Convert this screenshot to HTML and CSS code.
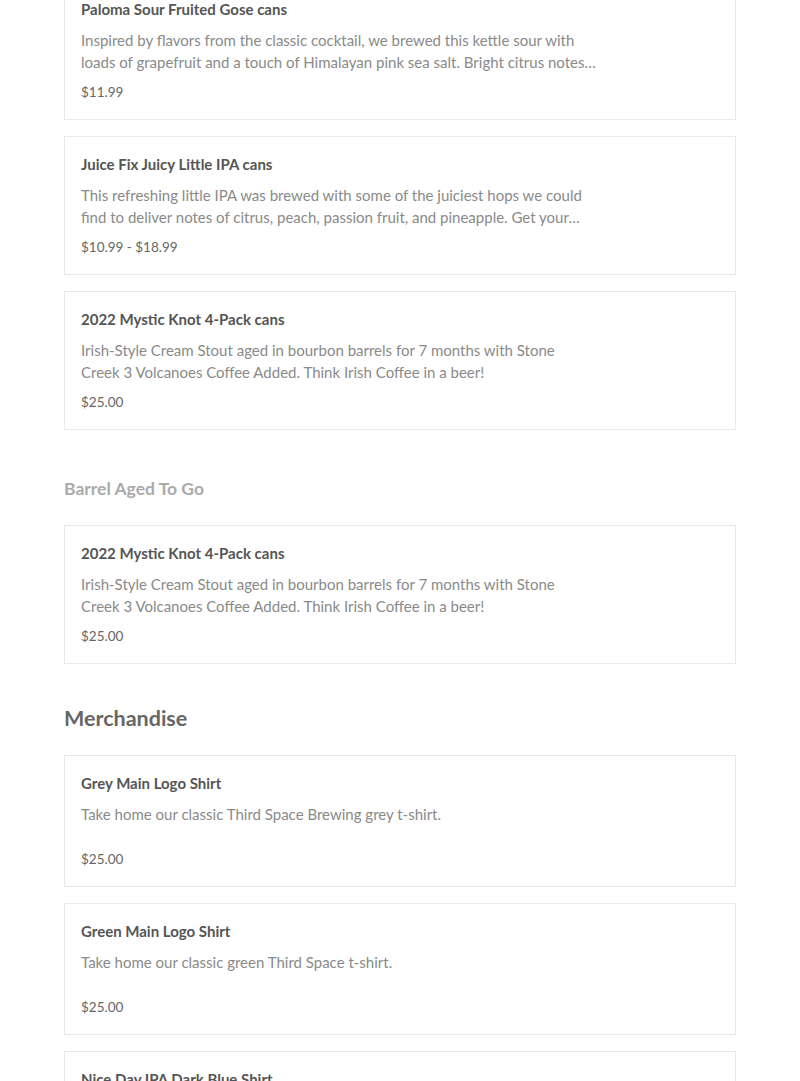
FILE: index.html
```
<!DOCTYPE html>
<html>
<head>
<meta charset="utf-8">
<link rel="stylesheet" href="styles.css">
</head>
<body>
<main class="menu">
  <section class="group">
    <div class="card">
      <h3 class="item-title">Paloma Sour Fruited Gose cans</h3>
      <p class="item-desc">Inspired by flavors from the classic cocktail, we brewed this kettle sour with loads of grapefruit and a touch of Himalayan pink sea salt. Bright citrus notes and a refreshing finish.</p>
      <div class="item-price">$11.99</div>
    </div>
    <div class="card">
      <h3 class="item-title">Juice Fix Juicy Little IPA cans</h3>
      <p class="item-desc">This refreshing little IPA was brewed with some of the juiciest hops we could find to deliver notes of citrus, peach, passion fruit, and pineapple. Get your juice fix today with this crushable little IPA.</p>
      <div class="item-price">$10.99 - $18.99</div>
    </div>
    <div class="card">
      <h3 class="item-title">2022 Mystic Knot 4-Pack cans</h3>
      <p class="item-desc">Irish-Style Cream Stout aged in bourbon barrels for 7 months with Stone Creek 3 Volcanoes Coffee Added. Think Irish Coffee in a beer!</p>
      <div class="item-price">$25.00</div>
    </div>
  </section>

  <h4 class="sub-heading">Barrel Aged To Go</h4>
  <section class="group">
    <div class="card">
      <h3 class="item-title">2022 Mystic Knot 4-Pack cans</h3>
      <p class="item-desc">Irish-Style Cream Stout aged in bourbon barrels for 7 months with Stone Creek 3 Volcanoes Coffee Added. Think Irish Coffee in a beer!</p>
      <div class="item-price">$25.00</div>
    </div>
  </section>

  <h2 class="heading">Merchandise</h2>
  <section class="group">
    <div class="card">
      <h3 class="item-title">Grey Main Logo Shirt</h3>
      <p class="item-desc">Take home our classic Third Space Brewing grey t-shirt.</p>
      <div class="item-price">$25.00</div>
    </div>
    <div class="card">
      <h3 class="item-title">Green Main Logo Shirt</h3>
      <p class="item-desc">Take home our classic green Third Space t-shirt.</p>
      <div class="item-price">$25.00</div>
    </div>
    <div class="card">
      <h3 class="item-title">Nice Day IPA Dark Blue Shirt</h3>
      <p class="item-desc">Take home our Nice Day IPA dark blue t-shirt.</p>
      <div class="item-price">$25.00</div>
    </div>
  </section>
</main>
</body>
</html>
```
FILE: styles.css
```
html, body {
  margin: 0;
  padding: 0;
  background: #fff;
}
body {
  font-family: "Lato", "Open Sans", sans-serif;
  color: #555;
}
.menu {
  width: 672px;
  margin: -19px auto 0;
}
.group {
  display: flex;
  flex-direction: column;
  gap: 16px;
}
.card {
  border: 1px solid #e9e9e9;
  padding: 15px 16px 16px;
  display: flex;
  flex-direction: column;
}
.item-title {
  margin: 0;
  font-size: 15px;
  line-height: 24px;
  font-weight: 700;
  color: #555;
}
.item-desc {
  margin: 8px 0 0;
  max-width: 515px;
  min-height: 37px;
  font-size: 15px;
  line-height: 22px;
  color: #8a8a8a;
  display: -webkit-box;
  -webkit-line-clamp: 2;
  -webkit-box-orient: vertical;
  overflow: hidden;
}
.item-price {
  margin-top: 8px;
  font-size: 13.5px;
  line-height: 22px;
  color: #666;
}
.sub-heading {
  margin: 47px 0 24px;
  font-size: 17.5px;
  line-height: 24px;
  font-weight: 700;
  color: #aaa;
}
.heading {
  margin: 40px 0 23px;
  font-size: 21.5px;
  line-height: 28px;
  font-weight: 700;
  color: #666;
}
```
